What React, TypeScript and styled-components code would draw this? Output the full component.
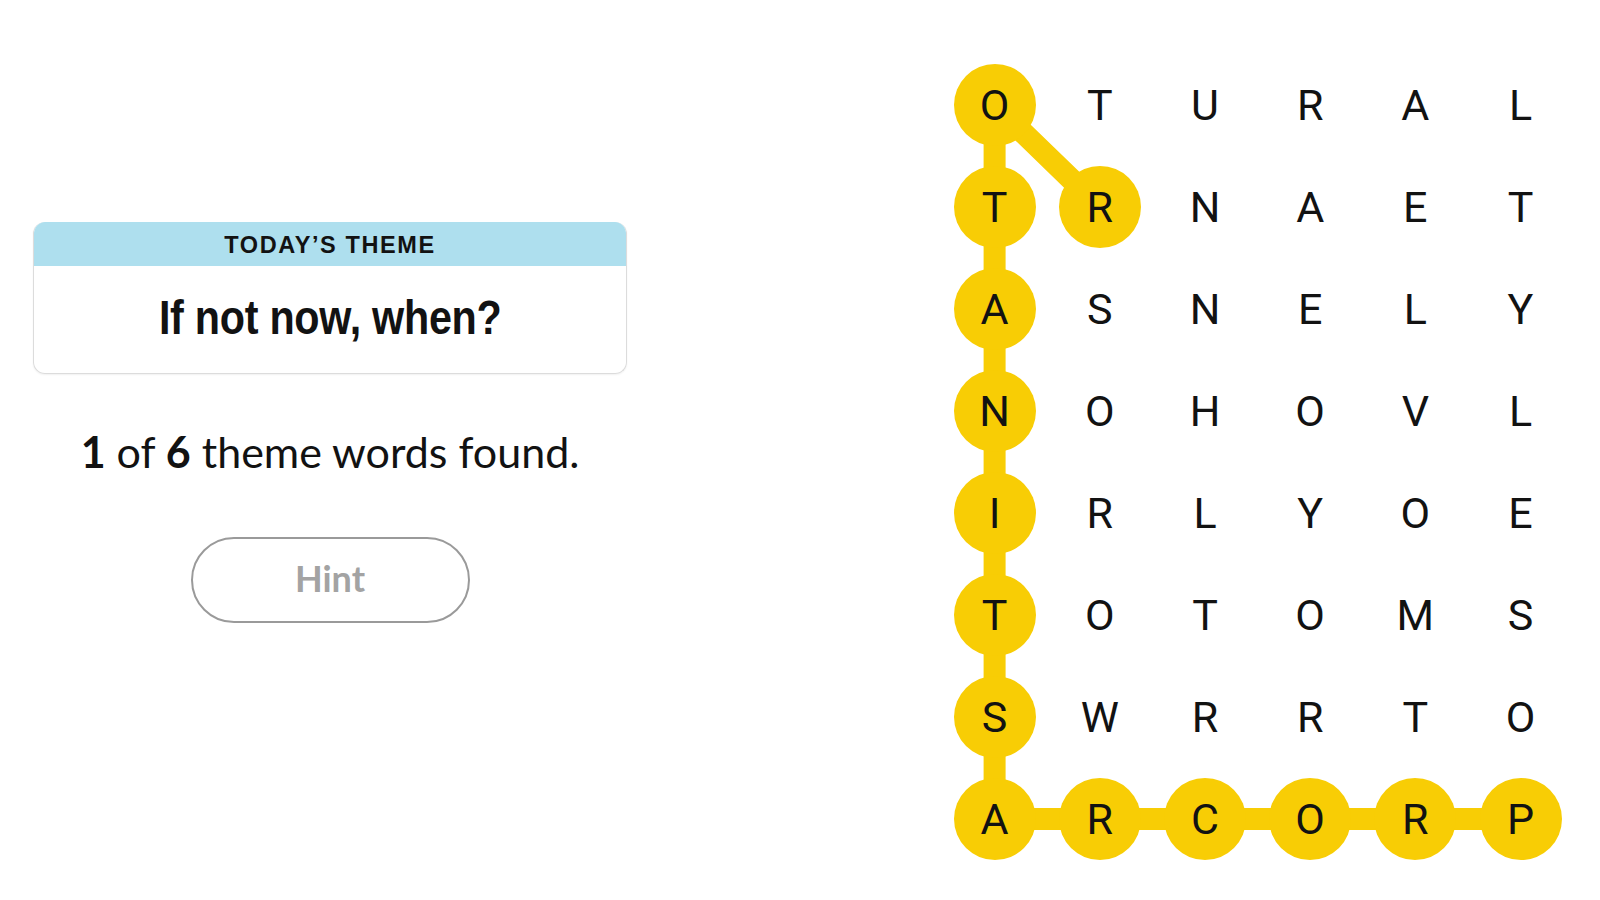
import React from 'react';
import styled, { createGlobalStyle } from 'styled-components';

const GlobalStyle = createGlobalStyle`
  html, body {
    margin: 0;
    padding: 0;
    background: #ffffff;
  }
  body {
    font-family: Lato, 'Liberation Sans', sans-serif;
    color: #121212;
  }
`;

const CELL_W = 105.2;
const CELL_H = 102;
const CIRCLE = 82;

const LETTERS = [
  'OTURAL',
  'TRNAET',
  'ASNELY',
  'NOHOVL',
  'IRLYOE',
  'TOTOMS',
  'SWRRTO',
  'ARCORP',
];

// the found word, traced from its first letter: PROCRASTINATOR
const PATH: [number, number][] = [
  [7, 5],
  [7, 4],
  [7, 3],
  [7, 2],
  [7, 1],
  [7, 0],
  [6, 0],
  [5, 0],
  [4, 0],
  [3, 0],
  [2, 0],
  [1, 0],
  [0, 0],
  [1, 1],
];

const Page = styled.div`
  display: flex;
  align-items: flex-start;
  padding: 54px 0 0 33px;
  min-height: 900px;
  box-sizing: border-box;
`;

const SidePanel = styled.div`
  width: 594px;
  margin-top: 168px;
  margin-right: 315px;
  display: flex;
  flex-direction: column;
  align-items: center;
`;

const ThemeCard = styled.div`
  width: 100%;
  border: 1.5px solid #dcdcdc;
  border-top: none;
  border-radius: 12px;
  overflow: hidden;
  box-sizing: border-box;
  box-shadow: 0 1px 2px rgba(0, 0, 0, 0.06);
`;

const ThemeHeader = styled.div`
  height: 44px;
  background: #aedfee;
  display: flex;
  align-items: center;
  justify-content: center;
  padding-top: 2px;
  box-sizing: border-box;
  font-family: 'Liberation Sans', Arial, sans-serif;
  font-weight: 700;
  font-size: 23.5px;
  letter-spacing: 1.6px;
  color: #121212;
`;

const ThemeBody = styled.div`
  height: 107px;
  display: flex;
  align-items: center;
  justify-content: center;
  padding-bottom: 4px;
  box-sizing: border-box;
`;

// no condensed face is installed, so the bold sans is narrowed by hand
const ThemeTitle = styled.span`
  display: inline-block;
  font-family: 'Liberation Sans', Arial, sans-serif;
  font-weight: 700;
  font-size: 48px;
  letter-spacing: -0.3px;
  color: #121212;
  transform: scaleX(0.86);
`;

const FoundText = styled.p`
  margin: 52px 0 0;
  font-family: Lato, sans-serif;
  font-size: 43px;
  line-height: 1.2;
  color: #121212;

  b {
    font-weight: 700;
  }
`;

const HintButton = styled.button`
  margin-top: 59px;
  width: 279px;
  height: 86px;
  border: 2px solid #9a9a9a;
  border-radius: 43px;
  background: #ffffff;
  padding-bottom: 4px;
  font-family: Lato, sans-serif;
  font-weight: 700;
  font-size: 36px;
  color: #a3a3a3;
  cursor: default;
`;

const Board = styled.div`
  position: relative;
  display: grid;
  grid-template-columns: repeat(6, ${CELL_W}px);
  grid-template-rows: repeat(8, ${CELL_H}px);
`;

const Connector = styled.svg`
  position: absolute;
  inset: 0;
  pointer-events: none;
`;

const Cell = styled.div`
  position: relative;
  display: flex;
  align-items: center;
  justify-content: center;
`;

const Letter = styled.div<{ $selected: boolean }>`
  width: ${CIRCLE}px;
  height: ${CIRCLE}px;
  border-radius: 50%;
  background: ${(p) => (p.$selected ? '#f8cd05' : 'transparent')};
  display: flex;
  align-items: center;
  justify-content: center;
  font-family: Roboto, 'Liberation Sans', sans-serif;
  font-size: 43px;
  font-weight: 400;
  color: #121212;
  line-height: 1;
`;

function center([r, c]: [number, number]): string {
  return `${c * CELL_W + CELL_W / 2},${r * CELL_H + CELL_H / 2}`;
}

export default function App(): JSX.Element {
  const selected = new Set(PATH.map(([r, c]) => `${r}-${c}`));
  return (
    <>
      <GlobalStyle />
      <Page>
        <SidePanel>
          <ThemeCard>
            <ThemeHeader>TODAY’S THEME</ThemeHeader>
            <ThemeBody>
              <ThemeTitle>If not now, when?</ThemeTitle>
            </ThemeBody>
          </ThemeCard>
          <FoundText>
            <b>1</b> of <b>6</b> theme words found.
          </FoundText>
          <HintButton>Hint</HintButton>
        </SidePanel>
        <Board>
          <Connector width={CELL_W * 6} height={CELL_H * 8}>
            <polyline
              points={PATH.map(center).join(' ')}
              fill="none"
              stroke="#f8cd05"
              strokeWidth={22}
              strokeLinejoin="round"
            />
          </Connector>
          {LETTERS.map((row, r) =>
            row.split('').map((ch, c) => (
              <Cell key={`${r}-${c}`}>
                <Letter $selected={selected.has(`${r}-${c}`)}>{ch}</Letter>
              </Cell>
            )),
          )}
        </Board>
      </Page>
    </>
  );
}
